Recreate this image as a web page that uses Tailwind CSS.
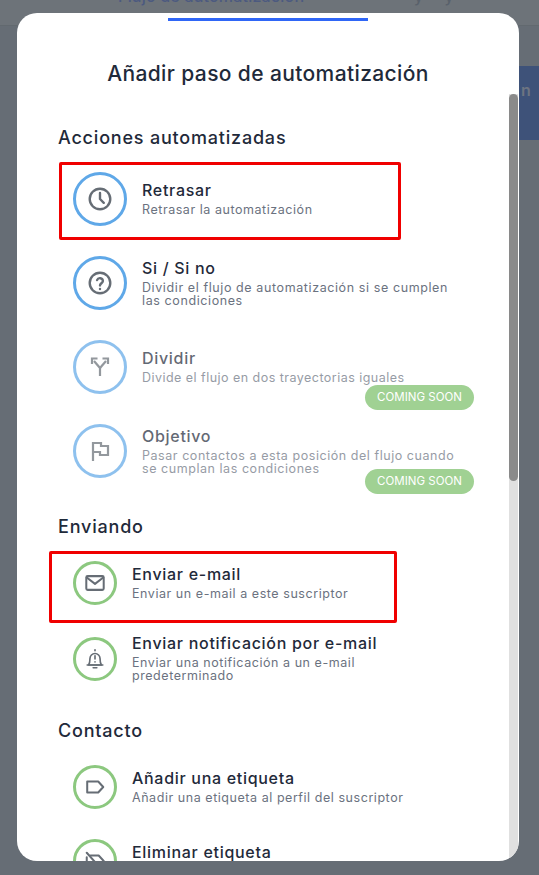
<!DOCTYPE html>
<html lang="en">
<head>
  <meta charset="utf-8">
  <title>Añadir paso de automatización</title>
  <script src="https://cdn.jsdelivr.net/npm/@tailwindcss/browser@4"></script>
</head>
<body class="bg-[#666d75] font-['Inter','Liberation_Sans',sans-serif]">
<div class="relative w-[539px] h-[875px] overflow-hidden">

  <!-- page behind the modal -->
  <div class="h-[26px] bg-[#6d7379] border-b border-[#62696f] overflow-hidden">
    <p class="flex ml-[118px] -mt-[14px] text-[16px] leading-[20px] font-medium tracking-[0.2px] text-[#4c5a80]">
      <span class="w-[186px] shrink-0 whitespace-nowrap">Flujo de automatización</span>
      <span class="ml-[110px] text-[#59616b]">y</span>
      <span class="ml-[21px] text-[#59616b]">y</span>
    </p>
  </div>
  <div class="absolute right-0 top-[66px] w-[20px] h-[74px] bg-[#3e5279] pl-[2px] pt-[14px] text-[16px] leading-[20px] font-semibold text-[#6d7481]">n</div>

  <!-- modal -->
  <div class="absolute left-[17px] top-[13px] w-[502px] h-[848px] bg-white rounded-[20px] overflow-hidden">
    <div class="absolute right-[1px] top-[81px] bottom-0 w-[9px] bg-[#e0e0e0]">
      <div class="h-[387px] w-[9px] bg-[#8a8a8a] rounded-full"></div>
    </div>

    <div class="w-[492px] pt-[46px] pl-[41px]">
      <h2 class="-ml-[41px] -mr-[10px] text-center text-[21px] leading-[30px] font-medium tracking-[0.38px] text-[#1f2a3a]">Añadir paso de automatización</h2>

      <h3 class="mt-[37px] text-[18px] leading-[24px] font-medium tracking-[0.8px] text-[#1f2a3a]">Acciones automatizadas</h3>
      <div class="mt-[22px] flex flex-col gap-[30px]">

        <div class="relative h-[54px] flex items-center gap-[15px] pl-[15px]">
          <div class="w-[54px] h-[54px] shrink-0 rounded-full border-[3px] border-[#5fa8e8] flex items-center justify-center">
            <svg class="w-[26px] h-[26px]" viewBox="0 0 24 24" fill="none" stroke="#666d75" stroke-width="2.2" stroke-linecap="round" stroke-linejoin="round"><circle cx="12" cy="12" r="9.5"/><path d="M12 6.5V12l3.5 3.5"/></svg>
          </div>
          <div class="mb-[2px]">
            <p class="text-[16px] leading-[20px] font-medium tracking-[0.7px] text-[#1f2a3a]">Retrasar</p>
            <p class="mt-[3px] text-[12.5px] leading-[13px] tracking-[0.55px] text-[#6b7280]">Retrasar la automatización</p>
          </div>
          <div class="absolute left-[1px] -top-[10px] w-[342px] h-[78px] border-[3px] border-[#f00000] rounded-[2px]"></div>
        </div>

        <div class="h-[54px] flex items-center gap-[15px] pl-[15px]">
          <div class="w-[54px] h-[54px] shrink-0 rounded-full border-[3px] border-[#5fa8e8] flex items-center justify-center">
            <svg class="w-[26px] h-[26px]" viewBox="0 0 24 24" fill="none" stroke="#666d75" stroke-width="2.2" stroke-linecap="round" stroke-linejoin="round"><circle cx="12" cy="12" r="9.5"/><path d="M9.3 9.3a2.8 2.8 0 0 1 5.4 .9c0 1.8-2.7 2.3-2.7 4"/><path d="M12 17.4v.1"/></svg>
          </div>
          <div class="w-[320px] mb-[2px]">
            <p class="text-[16px] leading-[20px] font-medium tracking-[0.7px] text-[#1f2a3a]">Si / Si no</p>
            <p class="mt-[3px] text-[12.5px] leading-[13px] tracking-[0.6px] text-[#6b7280]">Dividir el flujo de automatización si se cumplen las condiciones</p>
          </div>
        </div>

        <div class="relative h-[54px]">
          <div class="h-[54px] flex items-center gap-[15px] pl-[15px] opacity-70">
            <div class="w-[54px] h-[54px] shrink-0 rounded-full border-[3px] border-[#5fa8e8] flex items-center justify-center">
              <svg class="w-[24px] h-[24px]" viewBox="0 0 24 24" fill="none" stroke="#666d75" stroke-width="2.2" stroke-linejoin="miter"><path d="M12 21v-8L6 6"/><path d="M12 13l6-7"/><path d="M4 9V3.5h5.5"/><path d="M14.5 3.5H20V9"/></svg>
            </div>
            <div class="w-[320px] mb-[2px]">
              <p class="text-[16px] leading-[20px] font-medium tracking-[0.7px] text-[#1f2a3a]">Dividir</p>
              <p class="mt-[3px] text-[12.5px] leading-[13px] tracking-[0.47px] text-[#6b7280]">Divide el flujo en dos trayectorias iguales</p>
            </div>
          </div>
          <span class="absolute left-[307px] top-[45px] w-[109px] h-[25px] rounded-full bg-[#a0d193] text-white text-[11.5px] leading-[25px] text-center">COMING SOON</span>
        </div>

        <div class="relative h-[54px]">
          <div class="h-[54px] flex items-center gap-[15px] pl-[15px] opacity-70">
            <div class="w-[54px] h-[54px] shrink-0 rounded-full border-[3px] border-[#5fa8e8] flex items-center justify-center">
              <svg class="w-[24px] h-[24px]" viewBox="0 0 24 24" fill="none" stroke="#666d75" stroke-width="2.2" stroke-linejoin="miter"><path d="M5 22V4h8v3h7v9h-8v-3H5"/></svg>
            </div>
            <div class="w-[320px] mb-[2px]">
              <p class="text-[16px] leading-[20px] font-medium tracking-[0.7px] text-[#1f2a3a]">Objetivo</p>
              <p class="mt-[3px] text-[12.5px] leading-[13px] tracking-[0.55px] text-[#6b7280]">Pasar contactos a esta posición del flujo cuando se cumplan las condiciones</p>
            </div>
          </div>
          <span class="absolute left-[307px] top-[45px] w-[109px] h-[25px] rounded-full bg-[#a0d193] text-white text-[11.5px] leading-[25px] text-center">COMING SOON</span>
        </div>
      </div>

      <h3 class="mt-[37px] text-[18px] leading-[24px] font-medium tracking-[0.8px] text-[#1f2a3a]">Enviando</h3>
      <div class="mt-[22px] flex flex-col gap-[32px]">

        <div class="relative h-[44px] flex items-center gap-[15px] pl-[15px]">
          <div class="w-[44px] h-[44px] shrink-0 rounded-full border-[3px] border-[#8cc87f] flex items-center justify-center">
            <svg class="w-[22px] h-[22px]" viewBox="0 0 24 24" fill="none" stroke="#666d75" stroke-width="2.2" stroke-linejoin="round" stroke-linecap="round"><rect x="2.5" y="4.5" width="19" height="15" rx="1.5"/><path d="M3 6l9 7 9-7"/></svg>
          </div>
          <div class="mb-[2px]">
            <p class="text-[16px] leading-[20px] font-medium tracking-[0.7px] text-[#1f2a3a]">Enviar e-mail</p>
            <p class="mt-[3px] text-[12.5px] leading-[13px] tracking-[0.55px] text-[#6b7280]">Enviar un e-mail a este suscriptor</p>
          </div>
          <div class="absolute -left-[9px] -top-[10px] w-[348px] h-[72px] border-[3px] border-[#f00000] rounded-[2px]"></div>
        </div>

        <div class="h-[44px] flex items-center gap-[15px] pl-[15px]">
          <div class="w-[44px] h-[44px] shrink-0 rounded-full border-[3px] border-[#8cc87f] flex items-center justify-center">
            <svg class="w-[22px] h-[22px]" viewBox="0 0 24 24" fill="none" stroke="#666d75" stroke-width="1.8" stroke-linejoin="round" stroke-linecap="round"><path d="M5 18.5c1-1.5 1.5-3 1.5-7a5.5 5.5 0 0 1 11 0c0 4 .5 5.5 1.5 7z"/><path d="M3.5 18.5h17"/><path d="M10 21.5h4"/><path d="M12 3V2"/><path d="M12 8.5v3.5"/><path d="M12 15.2v.1"/></svg>
          </div>
          <div class="w-[320px] mb-[4px]">
            <p class="text-[16px] leading-[20px] font-medium tracking-[0.7px] text-[#1f2a3a]">Enviar notificación por e-mail</p>
            <p class="mt-[3px] text-[12.5px] leading-[13px] tracking-[0.55px] text-[#6b7280]">Enviar una notificación a un e-mail predeterminado</p>
          </div>
        </div>
      </div>

      <h3 class="mt-[38px] text-[18px] leading-[24px] font-medium tracking-[0.8px] text-[#1f2a3a]">Contacto</h3>
      <div class="mt-[22px] flex flex-col gap-[30px]">

        <div class="h-[44px] flex items-center gap-[15px] pl-[15px]">
          <div class="w-[44px] h-[44px] shrink-0 rounded-full border-[3px] border-[#8cc87f] flex items-center justify-center">
            <svg class="w-[22px] h-[22px]" viewBox="0 0 24 24" fill="none" stroke="#666d75" stroke-width="2.2" stroke-linejoin="round"><path d="M3.5 6h12l5.5 6-5.5 6h-12z"/></svg>
          </div>
          <div class="mb-[2px]">
            <p class="text-[16px] leading-[20px] font-medium tracking-[0.7px] text-[#1f2a3a]">Añadir una etiqueta</p>
            <p class="mt-[3px] text-[12.5px] leading-[13px] tracking-[0.55px] text-[#6b7280]">Añadir una etiqueta al perfil del suscriptor</p>
          </div>
        </div>

        <div class="h-[44px] flex items-center gap-[15px] pl-[15px]">
          <div class="w-[44px] h-[44px] shrink-0 rounded-full border-[3px] border-[#8cc87f] flex items-center justify-center">
            <svg class="w-[22px] h-[22px]" viewBox="0 0 24 24" fill="none" stroke="#666d75" stroke-width="2.2" stroke-linejoin="round" stroke-linecap="round"><path d="M7 6h9l5.5 6-3 3.3M14 18H3V8"/><path d="M3 3l16 18"/></svg>
          </div>
          <div class="mb-[2px]">
            <p class="text-[16px] leading-[20px] font-medium tracking-[0.7px] text-[#1f2a3a]">Eliminar etiqueta</p>
            <p class="mt-[3px] text-[12.5px] leading-[13px] tracking-[0.55px] text-[#6b7280]">Eliminar una etiqueta del perfil del suscriptor</p>
          </div>
        </div>
      </div>
    </div>
  </div>

  <!-- active tab underline sits above the modal -->
  <div class="absolute left-[168px] top-[18px] w-[200px] h-[3px] bg-[#2f66f6]"></div>
</div>
</body>
</html>
